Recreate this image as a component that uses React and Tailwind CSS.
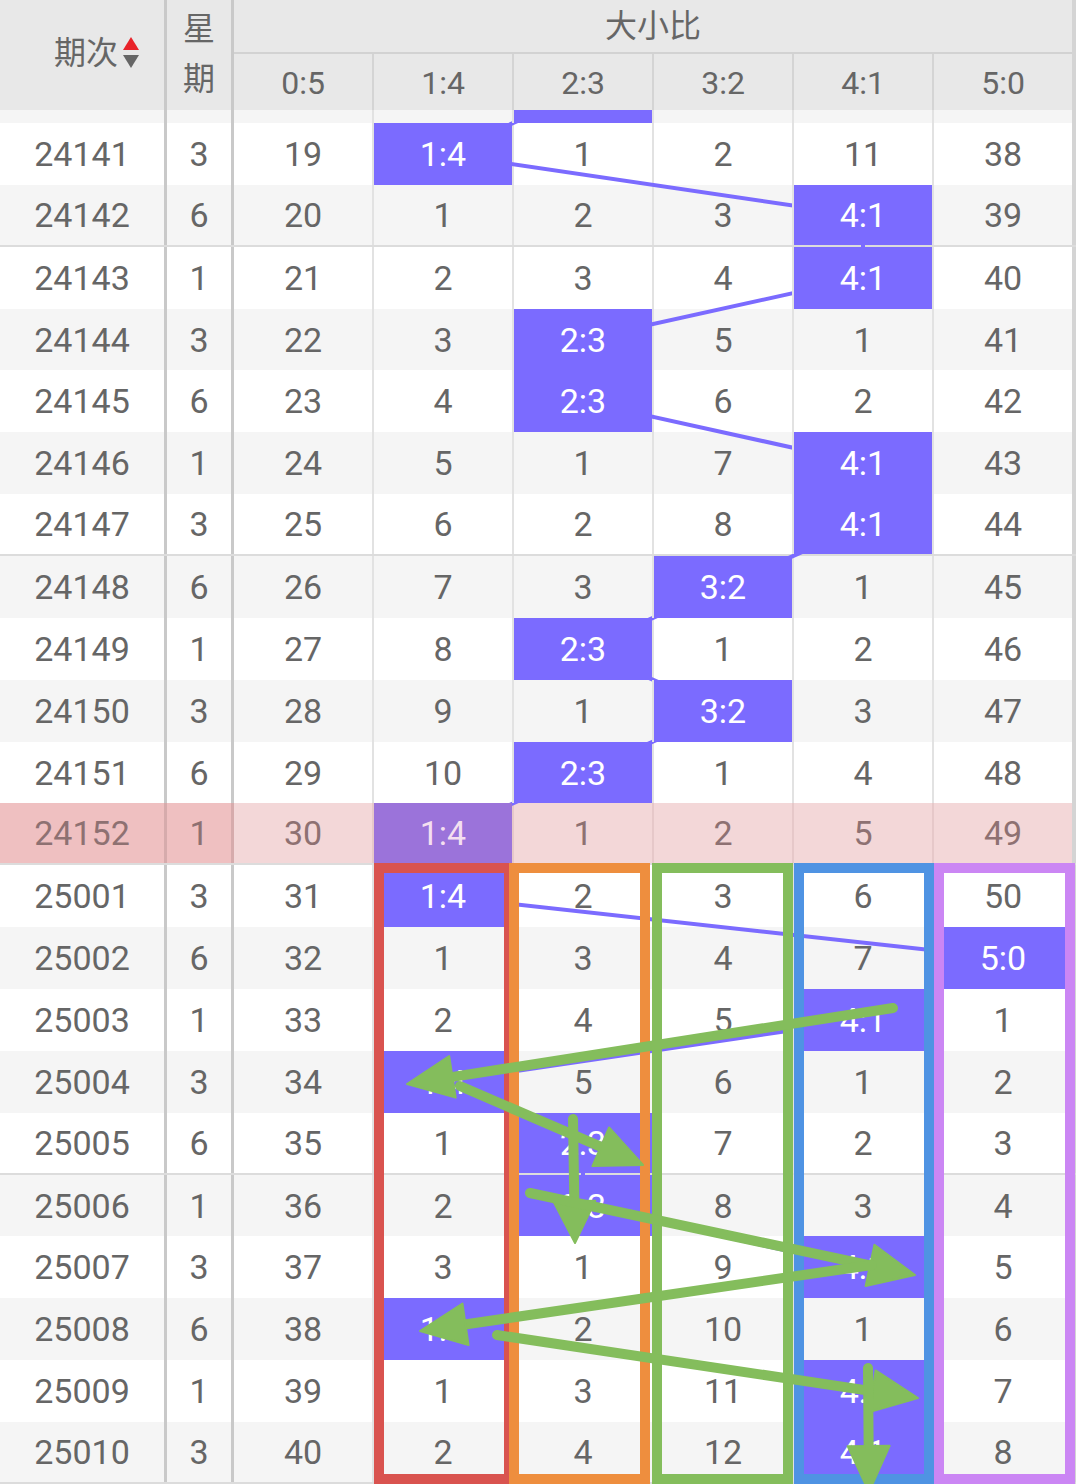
import React from 'react';

const LABELS = ['0:5', '1:4', '2:3', '3:2', '4:1', '5:0'];
const BLUE = '#7b6bff';

const ROWS = [
  ['24140', 1, [18, 3, 0, 1, 10, 37], 2, true],
  ['24141', 3, [19, 0, 1, 2, 11, 38], 1],
  ['24142', 6, [20, 1, 2, 3, 0, 39], 4],
  ['24143', 1, [21, 2, 3, 4, 0, 40], 4],
  ['24144', 3, [22, 3, 0, 5, 1, 41], 2],
  ['24145', 6, [23, 4, 0, 6, 2, 42], 2],
  ['24146', 1, [24, 5, 1, 7, 0, 43], 4],
  ['24147', 3, [25, 6, 2, 8, 0, 44], 4],
  ['24148', 6, [26, 7, 3, 0, 1, 45], 3],
  ['24149', 1, [27, 8, 0, 1, 2, 46], 2],
  ['24150', 3, [28, 9, 1, 0, 3, 47], 3],
  ['24151', 6, [29, 10, 0, 1, 4, 48], 2],
  ['24152', 1, [30, 0, 1, 2, 5, 49], 1],
  ['25001', 3, [31, 0, 2, 3, 6, 50], 1],
  ['25002', 6, [32, 1, 3, 4, 7, 0], 5],
  ['25003', 1, [33, 2, 4, 5, 0, 1], 4],
  ['25004', 3, [34, 0, 5, 6, 1, 2], 1],
  ['25005', 6, [35, 1, 0, 7, 2, 3], 2],
  ['25006', 1, [36, 2, 0, 8, 3, 4], 2],
  ['25007', 3, [37, 3, 1, 9, 0, 5], 4],
  ['25008', 6, [38, 0, 2, 10, 1, 6], 1],
  ['25009', 1, [39, 1, 3, 11, 0, 7], 4],
  ['25010', 3, [40, 2, 4, 12, 0, 8], 4],
];

const ROW_H = 61.86;
const FIRST_TOP = 61.14; // absolute y of row index 0 top

function Row({ r, i }) {
  const [id, week, vals, hi, hidden] = r;
  const pink = id === '24152';
  const gray = i % 2 === 0;
  const sep = i % 5 === 2;
  const rowBg = pink ? 'bg-[#f3d7d8]' : gray ? 'bg-[#f5f5f5]' : 'bg-white';
  const rowCls = sep
    ? 'flex h-[61.86px] shrink-0 border-b-2 border-[#dcdcdc] ' + rowBg
    : 'flex h-[61.86px] shrink-0 ' + rowBg;
  const txt = pink ? 'text-[#8e7172]' : 'text-[#666666]';
  const leftBg = pink ? 'bg-[#efc0c1] border-[#d6abac]' : 'border-[#c9c9c9]';
  const thin = pink ? 'border-[#e6c8c9]' : 'border-[#e2e2e2]';
  return (
    <div className={rowCls}>
      <div className={'w-[167px] shrink-0 border-r-[3px] flex items-center justify-center ' + leftBg + ' ' + txt}>
        {hidden ? '' : id}
      </div>
      <div className={'w-[67px] shrink-0 border-r-[3px] flex items-center justify-center ' + leftBg + ' ' + txt}>
        {hidden ? '' : week}
      </div>
      {vals.map((v, c) => {
        let base;
        if (c === 0) base = 'w-[138px] shrink-0 flex items-center justify-center';
        else base = 'w-[140px] shrink-0 border-l-2 flex items-center justify-center ' + thin;
        if (c === hi) {
          const hiBg = pink ? 'relative z-[1] bg-[#9b73da] text-[#f4dff0]' : 'relative z-[1] bg-[#7b6bff] text-white';
          return (
            <div key={c} className={base + ' ' + hiBg}>
              {hidden ? '' : LABELS[c]}
            </div>
          );
        }
        return (
          <div key={c} className={base + ' ' + txt}>
            {hidden ? '' : v}
          </div>
        );
      })}
      <div className="w-[4px] shrink-0 bg-[#d4d4d4]" />
    </div>
  );
}

function Arrow({ x1, y1, x2, y2, len = 46, hw = 21, color = '#84bd5c' }) {
  const dx = x2 - x1;
  const dy = y2 - y1;
  const L = Math.hypot(dx, dy);
  const ux = dx / L;
  const uy = dy / L;
  const nx = -uy;
  const ny = ux;
  const bx = x2 - ux * len;
  const by = y2 - uy * len;
  return (
    <g>
      <line x1={x1} y1={y1} x2={bx + ux * 6} y2={by + uy * 6} stroke={color} strokeWidth="10" strokeLinecap="round" />
      <polygon
        points={`${x2},${y2} ${bx + nx * hw},${by + ny * hw} ${bx - nx * hw},${by - ny * hw}`}
        fill={color}
        strokeLinejoin="round"
        stroke={color}
        strokeWidth="2"
      />
    </g>
  );
}

function Box({ x0, x1, y0, y1, color }) {
  return (
    <rect x={x0 + 5} y={y0 + 5} width={x1 - x0 - 10} height={y1 - y0 - 10} fill="none" stroke={color} strokeWidth="10" />
  );
}

export default function App() {
  const pts = ROWS.map((r, i) => {
    const x = 303 + 140 * r[3];
    const y = FIRST_TOP + i * ROW_H + ROW_H / 2;
    return `${x},${y.toFixed(2)}`;
  }).join(' ');

  return (
    <div className="relative w-[1076px] h-[1484px] overflow-hidden bg-white font-['Roboto','Noto_Sans_CJK_SC',sans-serif] text-[#666666]">
      {/* Header */}
      <div className="flex h-[110px] bg-[#e8e8e8] text-[32px] leading-none">
        <div className="w-[167px] shrink-0 border-r-[3px] border-[#c9c9c9] flex items-center justify-center pl-[30px] pb-[4px]">
          <span>期次</span>
          <svg width="18" height="34" viewBox="0 0 18 34" className="ml-[4px]">
            <polygon points="9,1 17,14 1,14" fill="#e8232a" />
            <polygon points="1,19 17,19 9,32" fill="#666666" />
          </svg>
        </div>
        <div className="w-[67px] shrink-0 border-r-[3px] border-[#c9c9c9] flex flex-col items-center justify-center gap-[18px] pb-[2px]">
          <span>星</span>
          <span>期</span>
        </div>
        <div className="flex-1 flex flex-col border-r-4 border-[#d4d4d4]">
          <div className="h-[54px] shrink-0 border-b-2 border-[#d2d2d2] flex items-center justify-center">大小比</div>
          <div className="flex flex-1">
            {LABELS.map((l, c) => (
              <div
                key={l}
                className={
                  c === 0
                    ? 'w-[138px] shrink-0 flex items-center justify-center pt-[2px]'
                    : 'w-[140px] shrink-0 border-l-2 border-[#d4d4d4] flex items-center justify-center pt-[2px]'
                }
              >
                {l}
              </div>
            ))}
          </div>
        </div>
      </div>

      {/* Body */}
      <div className="relative h-[1374px] overflow-hidden text-[34px] leading-none">
        <div className="flex flex-col mt-[-48.86px]">
          {ROWS.map((r, i) => (
            <Row key={r[0]} r={r} i={i} />
          ))}
        </div>

        {/* trend line */}
        <svg className="absolute left-0 top-[-110px] w-[1076px] h-[1484px] pointer-events-none" viewBox="0 0 1076 1484">
          <polyline points={pts} fill="none" stroke={BLUE} strokeWidth="4" strokeLinejoin="round" />
        </svg>

        {/* annotations */}
        <svg className="absolute left-0 top-[-110px] z-[2] w-[1076px] h-[1484px] pointer-events-none" viewBox="0 0 1076 1484">
          <Box x0={374} x1={514} y0={863} y1={1484} color="#d9534f" />
          <Box x0={509} x1={650} y0={863} y1={1484} color="#ee8e3e" />
          <Box x0={652} x1={793} y0={863} y1={1484} color="#84bd5c" />
          <Box x0={794} x1={934} y0={863} y1={1484} color="#4f93e3" />
          <Box x0={934} x1={1075} y0={863} y1={1484} color="#cb86f4" />

          <Arrow x1={893} y1={1008} x2={407} y2={1084} />
          <Arrow x1={460} y1={1086} x2={643} y2={1165} />
          <Arrow x1={573} y1={1119} x2={575} y2={1243} len={42} />
          <Arrow x1={530} y1={1193} x2={915} y2={1275} />
          <Arrow x1={872} y1={1265} x2={420} y2={1331} />
          <Arrow x1={497} y1={1335} x2={918} y2={1398} />
          <Arrow x1={868} y1={1368} x2={869} y2={1492} />
        </svg>
      </div>
    </div>
  );
}
